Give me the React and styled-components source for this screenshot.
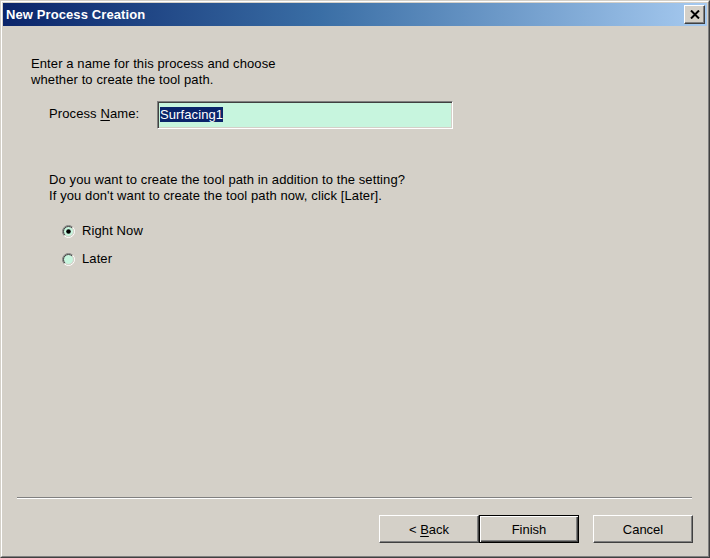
import React from "react";
import styled, { createGlobalStyle } from "styled-components";

const Global = createGlobalStyle`
  html, body { margin: 0; padding: 0; background: #d4d0c8; }
  body { font-family: "Liberation Sans", Arial, sans-serif; }
`;

const Window = styled.div`
  box-sizing: border-box;
  width: 710px;
  height: 558px;
  background: #d4d0c8;
  border: 1px solid;
  border-color: #d4d0c8 #404040 #404040 #d4d0c8;
  display: flex;
  flex-direction: column;
`;

const Frame = styled.div`
  flex: 1;
  display: flex;
  flex-direction: column;
  border: 1px solid;
  border-color: #ffffff #808080 #808080 #ffffff;
  padding: 1px;
  min-height: 0;
`;

const TitleBar = styled.div`
  height: 23px;
  flex: none;
  display: flex;
  align-items: center;
  justify-content: space-between;
  padding: 0 2px 0 3px;
  background: linear-gradient(to right, #0a246a 0%, #3a6ea5 45%, #a6caf0 100%);
`;

const TitleText = styled.span`
  color: #ffffff;
  font: bold 13px "Liberation Sans", Arial, sans-serif;
  letter-spacing: 0.1px;
`;

const CaptionButton = styled.div`
  box-sizing: border-box;
  width: 21px;
  height: 19px;
  background: #d4d0c8;
  border: 1px solid;
  border-color: #ffffff #404040 #404040 #ffffff;
  box-shadow: inset -1px -1px 0 #808080;
  display: flex;
  align-items: center;
  justify-content: center;
`;

const Body = styled.div`
  flex: 1;
  display: flex;
  flex-direction: column;
  padding: 30px 0 12px 0;
  font-size: 13px;
  line-height: 16px;
  color: #000;
  letter-spacing: 0.1px;
`;

const Paragraph = styled.p`
  margin: ${(p) => p.$mt || 0}px 0 0 ${(p) => p.$ml}px;
`;

const FieldRow = styled.div`
  display: flex;
  align-items: center;
  margin: 13px 0 0 46px;
`;

const Label = styled.label`
  width: 108px;
  flex: none;
  padding-bottom: 3px;
`;

const Underline = styled.span`
  text-decoration: underline;
  text-underline-offset: 2px;
`;

const TextBox = styled.div`
  box-sizing: border-box;
  width: 296px;
  height: 28px;
  background: #c7f5de;
  border: 1px solid;
  border-color: #808080 #ffffff #ffffff #808080;
  box-shadow: inset 1px 1px 0 #404040, inset -1px -1px 0 #d4d0c8;
  padding: 0 0 2px 2px;
  display: flex;
  align-items: center;
`;

const Selected = styled.span`
  background: #0a246a;
  color: #ffffff;
  line-height: 15px;
`;

const RadioGroup = styled.div`
  display: flex;
  flex-direction: column;
  gap: 12px;
  margin: 19px 0 0 59px;
`;

const RadioRow = styled.label`
  display: flex;
  align-items: center;
  gap: 7px;
  height: 16px;
`;

const Footer = styled.div`
  margin-top: auto;
  display: flex;
  flex-direction: column;
`;

const Separator = styled.div`
  height: 0;
  border-top: 1px solid #808080;
  border-bottom: 1px solid #ffffff;
  margin: 0 15px 0 14px;
`;

const ButtonRow = styled.div`
  display: flex;
  justify-content: flex-end;
  margin: 16px 14px 0 0;
`;

const Button = styled.button`
  box-sizing: border-box;
  width: 100px;
  height: 28px;
  margin-left: ${(p) => p.$gap || 0}px;
  padding: 0;
  background: #d4d0c8;
  font: 13px "Liberation Sans", Arial, sans-serif;
  color: #000;
  border: 1px solid;
  border-color: ${(p) =>
    p.$default ? "#000 #000 #000 #000" : "#ffffff #404040 #404040 #ffffff"};
  box-shadow: ${(p) =>
    p.$default
      ? "inset 1px 1px 0 #ffffff, inset -1px -1px 0 #404040, inset -2px -2px 0 #808080"
      : "inset -1px -1px 0 #808080"};
`;

function Radio({ checked }) {
  const c = 6.5;
  const arc = (r) => {
    const d = r * Math.SQRT1_2;
    return {
      ul: `M ${c - d} ${c + d} A ${r} ${r} 0 0 1 ${c + d} ${c - d}`,
      lr: `M ${c + d} ${c - d} A ${r} ${r} 0 0 1 ${c - d} ${c + d}`,
    };
  };
  const o = arc(6);
  const i = arc(5);
  return (
    <svg width="13" height="13" viewBox="0 0 13 13">
      <circle cx={c} cy={c} r="4.8" fill="#c7f5de" />
      <path d={o.ul} stroke="#808080" fill="none" />
      <path d={o.lr} stroke="#ffffff" fill="none" />
      <path d={i.ul} stroke="#404040" fill="none" />
      <path d={i.lr} stroke="#d4d0c8" fill="none" />
      {checked && <circle cx={c} cy={c} r="2.3" fill="#000" />}
    </svg>
  );
}

export default function App() {
  return (
    <>
      <Global />
      <Window>
        <Frame>
          <TitleBar>
            <TitleText>New Process Creation</TitleText>
            <CaptionButton>
              <svg width="10" height="9" viewBox="0 0 10 9">
                <path d="M1 0.5 L9 8.5 M9 0.5 L1 8.5" stroke="#000" strokeWidth="2" />
              </svg>
            </CaptionButton>
          </TitleBar>
          <Body>
            <Paragraph $ml={28}>
              Enter a name for this process and choose
              <br />
              whether to create the tool path.
            </Paragraph>
            <FieldRow>
              <Label>
                Process <Underline>N</Underline>ame:
              </Label>
              <TextBox>
                <Selected>Surfacing1</Selected>
              </TextBox>
            </FieldRow>
            <Paragraph $ml={46} $mt={43}>
              Do you want to create the tool path in addition to the setting?
              <br />
              If you don't want to create the tool path now, click [Later].
            </Paragraph>
            <RadioGroup>
              <RadioRow>
                <Radio checked />
                Right Now
              </RadioRow>
              <RadioRow>
                <Radio />
                Later
              </RadioRow>
            </RadioGroup>
            <Footer>
              <Separator />
              <ButtonRow>
                <Button>
                  &lt; <Underline>B</Underline>ack
                </Button>
                <Button $default>Finish</Button>
                <Button $gap={14}>Cancel</Button>
              </ButtonRow>
            </Footer>
          </Body>
        </Frame>
      </Window>
    </>
  );
}
